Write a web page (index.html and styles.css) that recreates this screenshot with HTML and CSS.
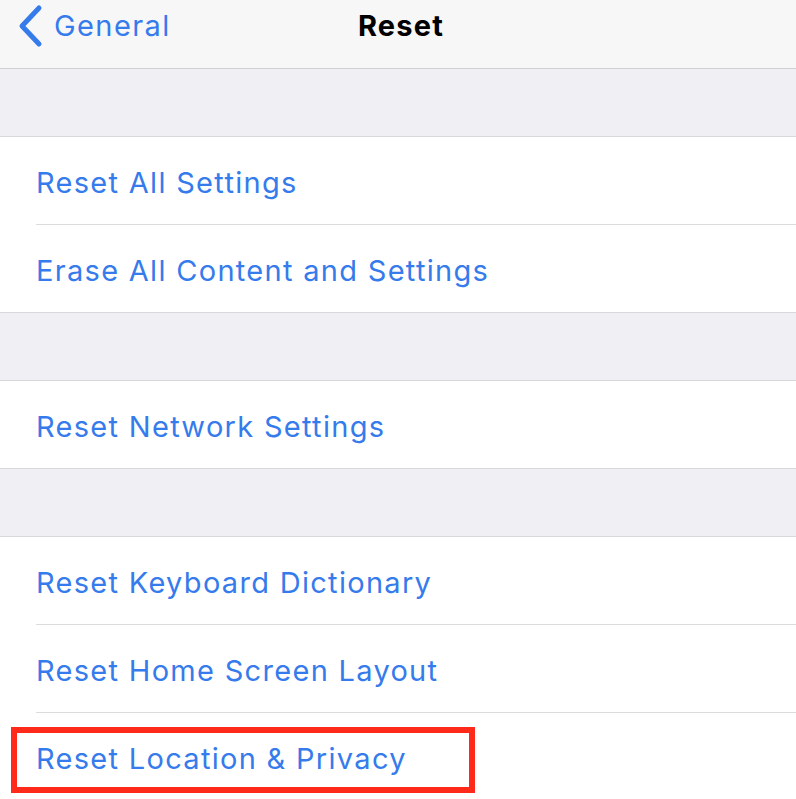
FILE: index.html
```html
<!DOCTYPE html>
<html>
<head>
<meta charset="utf-8">
<link rel="stylesheet" href="styles.css">
</head>
<body>
<div class="screen">
  <header class="nav">
    <div class="back">
      <svg class="chev" width="30" height="44" viewBox="0 0 30 44"><polyline points="23,4 6,22 23,40" fill="none" stroke="#367bec" stroke-width="5" stroke-linecap="round" stroke-linejoin="round"/></svg>
      <span class="back-label">General</span>
    </div>
    <div class="title">Reset</div>
  </header>
  <div class="gap"></div>
  <section class="group">
    <div class="row"><span class="label">Reset All Settings</span></div>
    <div class="row"><span class="label">Erase All Content and Settings</span></div>
  </section>
  <div class="gap"></div>
  <section class="group">
    <div class="row"><span class="label">Reset Network Settings</span></div>
  </section>
  <div class="gap"></div>
  <section class="group">
    <div class="row"><span class="label">Reset Keyboard Dictionary</span></div>
    <div class="row"><span class="label">Reset Home Screen Layout</span></div>
    <div class="row"><span class="label">Reset Location &amp; Privacy</span><span class="highlight"></span></div>
  </section>
</div>
</body>
</html>
```

FILE: styles.css
```css
* { box-sizing: border-box; }
html, body { margin: 0; padding: 0; }
body {
  width: 796px;
  height: 799px;
  overflow: hidden;
  background: #efeff4;
  font-family: Inter, "Liberation Sans", sans-serif;
}
.screen { display: flex; flex-direction: column; }
.nav {
  height: 69px;
  background: #f7f7f8;
  border-bottom: 1px solid #d0d0d3;
  position: relative;
  display: flex;
  align-items: center;
  justify-content: center;
}
.back {
  position: absolute;
  left: 16px;
  top: 4px;
  display: flex;
  align-items: center;
  gap: 8px;
}
.chev { display: block; }
.back-label {
  color: #367bec;
  font-size: 29px;
  letter-spacing: 1.4px;
  margin-top: -2px;
}
.title {
  font-size: 29px;
  font-weight: 700;
  letter-spacing: 1.2px;
  color: #000;
  margin-top: -18px;
  margin-left: 6px;
}
.gap {
  height: 68px;
  background: #efeff4;
  border-bottom: 1px solid #d8d8dc;
}
.group {
  background: #fff;
  border-bottom: 1px solid #d8d8dc;
}
.row {
  height: 88px;
  margin-left: 36px;
  display: flex;
  align-items: center;
  padding-top: 4px;
  border-bottom: 1px solid #dcdcdf;
  position: relative;
}
.row:last-child { border-bottom: none; height: 87px; }
.label {
  color: #367bec;
  font-size: 29px;
  letter-spacing: 1.3px;
}
.highlight {
  position: absolute;
  left: -25px;
  top: 14px;
  width: 464px;
  height: 66px;
  border: 6px solid #ff2a1a;
}
```
